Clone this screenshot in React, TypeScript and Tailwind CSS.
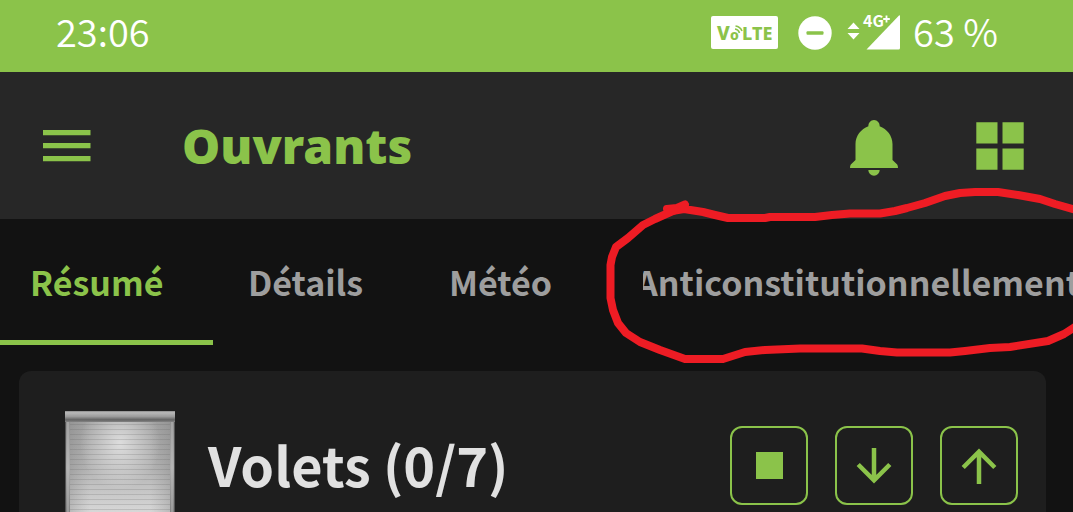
import { useState } from "react";
import clsx from "clsx";

const tabs = [
  { label: "Résumé", className: "w-[213px] shrink-0 pl-[30px]" },
  { label: "Détails", className: "w-[201px] shrink-0 pl-[35px]" },
  { label: "Météo", className: "w-[190px] shrink-0 pl-[35px]" },
  { label: "Anticonstitutionnellement", className: "min-w-0 flex-1 pl-[39px]" },
];

function StatusBar() {
  return (
    <div className="flex h-[72px] items-center justify-between bg-[#8bc34a] pb-[7px] pl-14 pr-[75px] text-[38px] font-[350] leading-none text-white">
      <span className="pb-1">23:06</span>

      <div className="flex items-center">
        {/* VoLTE badge */}
        <svg className="h-[33px] w-[67px]" viewBox="0 0 67 33">
          <rect width="67" height="33" rx="2" fill="#fff" />
          <g fill="#8bc34a" fontFamily="Noto Sans, sans-serif" fontWeight="800">
            <text x="6" y="24" fontSize="19">V</text>
            <text x="19" y="24" fontSize="14">o</text>
            <text x="31" y="24" fontSize="18">LTE</text>
          </g>
          <path d="M24 13a5.500 5.500 0 0 1 4.500 4M24.500 10a8 8 0 0 1 6.500 5" fill="none" stroke="#8bc34a" strokeWidth="1.600" />
        </svg>

        {/* Do not disturb */}
        <svg className="ml-5 h-[34px] w-[34px]" viewBox="0 0 34 34">
          <circle cx="17" cy="17" r="16.700" fill="#fff" />
          <rect x="8.500" y="15.300" width="17" height="3.400" rx="1" fill="#8bc34a" />
        </svg>

        {/* Signal */}
        <svg className="ml-[15px] h-9 w-[54px] overflow-visible" viewBox="0 0 54 36">
          <path d="M0.500 14 6.500 7.500l6 6.500zM0.500 18l6 6.500 6-6.500z" fill="#fff" />
          <path d="M19.500 34.500 52 .500q1-.8 1 .5v32q0 1.500-1.500 1.500z" fill="#fff" />
          <text x="16" y="12" fontSize="16" fontWeight="700" fill="#fff">4G</text>
          <path d="M39.500 .5v7M36.200 4h6.600" stroke="#fff" strokeWidth="1.800" />
        </svg>

        <span className="ml-3 pb-1">63 %</span>
      </div>
    </div>
  );
}

function Header() {
  return (
    <header className="flex h-[147px] items-center bg-[#272727] pl-[43px] pr-[49px] text-[#8bc34a]">
      <button aria-label="Menu">
        <svg className="h-8 w-12" viewBox="0 0 48 32" fill="currentColor">
          <path d="M0 0h47.500V5.300H0zM0 13h47.500V18.300H0zM0 26h47.500V31.300H0z" />
        </svg>
      </button>

      <h1 className="ml-[91px] font-['Noto_Sans',sans-serif] text-[48px] font-black leading-[64px]">
        Ouvrants
      </h1>

      <div className="ml-auto flex items-center gap-[78px]">
        <button aria-label="Notifications" className="pt-1">
          <svg className="h-14 w-12" viewBox="0 0 48 56" fill="currentColor">
            <path d="M24 0a5.600 5.600 0 0 0-5.600 6.300C11 9 5.500 16 5.500 24v16L.8 44.500Q0 45.500 0 48h48q0-2.500-.8-3.500L42.500 40V24c0-8-5.500-15-12.900-17.700A5.600 5.600 0 0 0 24 0z" />
            <path d="M18.300 50h11.400a5.700 5.700 0 0 1-11.400 0z" />
          </svg>
        </button>
        <button aria-label="Widgets">
          <svg className="h-12 w-12" viewBox="0 0 48 48" fill="currentColor">
            <path d="M.3.300h21.200v21.200H.3zM26.500.300h21.200v21.200H26.500zM.3 26.500h21.200v21.200H.3zM26.500 26.500h21.200v21.200H26.500z" />
          </svg>
        </button>
      </div>
    </header>
  );
}

function Scribble() {
  return (
    <svg
      className="pointer-events-none absolute -top-8 left-[604px] h-[176px] w-[469px]"
      viewBox="604 187 469 176"
      fill="none"
      stroke="#ee1c24"
      strokeWidth="8"
      strokeLinejoin="round"
      strokeLinecap="round"
    >
      <path d="M685 204.500 677 208 667 209 672 211 684 209 703 212 715 215 728 218 765 218 770 217 815 217 832 215 850 213.500 880 213.500 895 211 907 208 925 203 945 196 960 193 975 192 998 192 1018 195 1040 199 1055 204 1080 211" />
      <path d="M675 210 655 219 643 225 628 238 616 247 612 257 610.500 265 610.500 298 613 310 618 323 626 333 640 342 660 350 685 359 723 359 745 352 765 350 800 348.500 862 348.500 880 351 897 352.500 950 352.500 965 351 990 348 1010 347 1048 341 1064 334 1078 325" />
    </svg>
  );
}

function Shutter() {
  const slats = Array.from({ length: 24 }, (_, i) => 13 + i * 5);
  return (
    <svg className="h-[128px] w-[110px]" viewBox="0 0 110 128">
      <defs>
        <linearGradient id="lid" x1="0" y1="0" x2="0" y2="1">
          <stop offset="0" stopColor="#8a8a8a" />
          <stop offset=".15" stopColor="#b8b8b8" />
          <stop offset=".5" stopColor="#9b9b9b" />
          <stop offset=".8" stopColor="#636363" />
          <stop offset="1" stopColor="#848484" />
        </linearGradient>
        <linearGradient id="curtain" x1="0" y1="0" x2="0" y2="1">
          <stop offset="0" stopColor="#a2a2a2" />
          <stop offset=".4" stopColor="#b4b4b4" />
          <stop offset=".8" stopColor="#dadada" />
          <stop offset="1" stopColor="#dedede" />
        </linearGradient>
        <linearGradient id="sides">
          <stop offset="0" stopColor="#777" stopOpacity=".3" />
          <stop offset=".2" stopColor="#888" stopOpacity="0" />
          <stop offset=".8" stopColor="#888" stopOpacity="0" />
          <stop offset="1" stopColor="#777" stopOpacity=".3" />
        </linearGradient>
        <radialGradient id="shine" cx=".5" cy=".18" r=".4">
          <stop offset="0" stopColor="#fff" stopOpacity=".6" />
          <stop offset="1" stopColor="#fff" stopOpacity="0" />
        </radialGradient>
        <linearGradient id="rail" x1="0" y1="0" x2="0" y2="1">
          <stop offset="0" stopColor="#8e8e8e" />
          <stop offset=".4" stopColor="#adadad" />
          <stop offset="1" stopColor="#696969" />
        </linearGradient>
      </defs>
      <rect x=".5" y="9" width="109" height="119" fill="url(#rail)" />
      <rect x="5" y="11" width="100" height="117" fill="url(#curtain)" />
      <rect x="5" y="11" width="100" height="117" fill="url(#sides)" />
      <rect x="5" y="11" width="100" height="117" fill="url(#shine)" />
      {slats.map((y) => (
        <rect key={y} x="5" y={y} width="100" height="1" fill="#666" opacity=".22" />
      ))}
      <path d="M3 11v117M107 11v117" stroke="#c4c4c4" strokeWidth="1.500" opacity=".5" />
      <path d="M.5 10v118M109.500 10v118" stroke="#555" />
      <rect width="110" height="11" fill="url(#lid)" />
    </svg>
  );
}

function ShutterCard() {
  const button =
    "flex h-[79px] w-[78px] items-center justify-center rounded-xl border-2 border-[#8bc34a]";

  return (
    <section className="ml-[19px] mr-[27px] mt-[26px] flex items-start rounded-xl bg-[#1e1e1e] pb-10 pl-[46px] pr-7 pt-10">
      <Shutter />
      <h2 className="ml-[33px] mt-3.5 text-[54px] font-bold leading-[78px] text-[#e1e1e1]">
        Volets (0/7)
      </h2>
      <div className="ml-auto mt-[15px] flex gap-[27px] text-[#8bc34a]">
        <button aria-label="Arrêter" className={button}>
          <svg className="h-[27px] w-[27px]" viewBox="0 0 27 27" fill="currentColor">
            <rect width="27" height="27" />
          </svg>
        </button>
        <button aria-label="Descendre" className={button}>
          <svg className="h-9 w-9" viewBox="0 0 36 36" fill="none" stroke="currentColor" strokeWidth="4.500">
            <path d="M18 0v32M2.200 16.500 18 32.300l15.800-15.800" />
          </svg>
        </button>
        <button aria-label="Monter" className={button}>
          <svg className="h-9 w-9" viewBox="0 0 36 36" fill="none" stroke="currentColor" strokeWidth="4.500">
            <path d="M18 36V4M2.200 19.500 18 3.700l15.800 15.800" />
          </svg>
        </button>
      </div>
    </section>
  );
}

export default function App() {
  const [active, setActive] = useState("Résumé");

  return (
    <div className="h-screen overflow-hidden bg-[#121212] font-['Noto_Sans_CJK_SC',sans-serif]">
      <StatusBar />
      <Header />

      <nav className="relative flex h-[126px]">
        {tabs.map((tab) => (
          <button
            key={tab.label}
            onClick={() => setActive(tab.label)}
            className={clsx(
              "flex items-center border-b-[5px] pt-1 text-[34px] font-bold leading-[52px]",
              tab.className,
              active === tab.label
                ? "border-[#8bc34a] text-[#8bc34a]"
                : "border-transparent text-[#9e9e9e]"
            )}
          >
            <span className="flex min-w-0 justify-center overflow-hidden whitespace-nowrap">
              {tab.label}
            </span>
          </button>
        ))}
        <Scribble />
      </nav>

      <ShutterCard />
    </div>
  );
}
